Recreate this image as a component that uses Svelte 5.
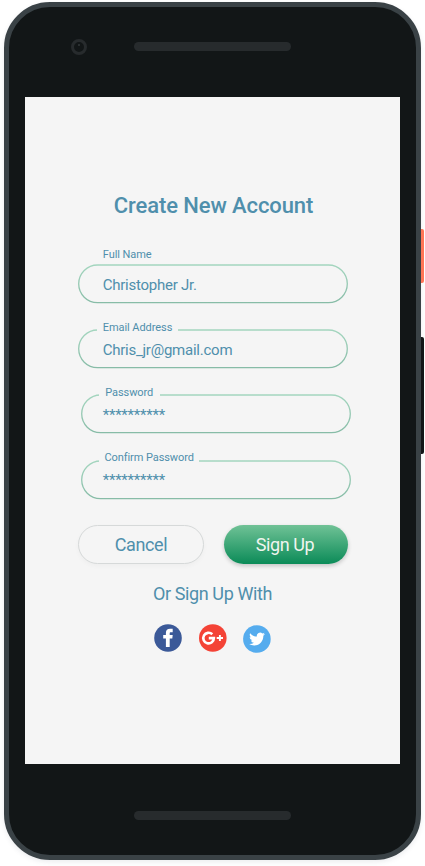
<script>
  const fields = [
    { label: 'Full Name', value: 'Christopher Jr.', shift: 0, labelLeft: 24.8, labelTop: -16, textTop: 1 },
    { label: 'Email Address', value: 'Chris_jr@gmail.com', shift: 0, labelLeft: 24.8, labelTop: -8.4, textTop: 1, gap: 81 },
    { label: 'Password', value: '**********', shift: 2.7, labelLeft: 24.5, labelTop: -8.2, textTop: 0.8, gap: 60.5 },
    { label: 'Confirm Password', value: '**********', shift: 2.7, labelLeft: 23.7, labelTop: -9, textTop: 0, gap: 99.5 }
  ];
</script>

<div class="stage">
  <div class="phone">
    <span class="power"></span>
    <span class="volume"></span>
    <header class="top">
      <span class="camera"><i></i></span>
      <span class="speaker"></span>
    </header>
    <main class="screen">
      <h1>Create New Account</h1>
      <form>
        {#each fields as f, i}
          <div class="field" style="margin-left: {f.shift}px">
            <svg class="outline" width="270" height="40" viewBox="0 0 270 40">
              <defs>
                <linearGradient id="edge{i}" x1="0" y1="0" x2="0" y2="40" gradientUnits="userSpaceOnUse">
                  <stop offset="0" stop-color="#a4d6bf" />
                  <stop offset="1" stop-color="#86bba6" />
                </linearGradient>
              </defs>
              <rect x=".7" y="1" width="268.6" height="37.7" rx="18.85" fill="none" stroke="url(#edge{i})" stroke-width="1.3" />
            </svg>
            {#if f.gap}
              <span class="notch" style="width: {f.gap}px"></span>
            {/if}
            <span class="label" style="left: {f.labelLeft}px; top: {f.labelTop}px">{f.label}</span>
            <span class="value" style="padding: {f.textTop}px 0 0 {24.7 - f.shift}px">{f.value}</span>
          </div>
        {/each}
        <div class="actions">
          <button type="button" class="cancel">Cancel</button>
          <button type="button" class="signup">Sign Up</button>
        </div>
      </form>
      <p>Or Sign Up With</p>
      <div class="social">
        <svg width="28" height="28" viewBox="0 0 28 28">
          <circle cx="14" cy="14" r="13.8" fill="#3b5998" />
          <path fill="#fff" d="M11.9 23v-8.4H9.2V11h2.7V8.9c0-2.9 1.5-4.2 4.2-4.2h2.6v3.6h-1.8c-1 0-1.2.4-1.2 1.3V11h3l-.4 3.6h-2.6V23z" />
        </svg>
        <svg width="28" height="28" viewBox="0 0 28 28">
          <circle cx="13.8" cy="14" r="13.8" fill="#f44336" />
          <path fill="none" stroke="#fff" stroke-width="2.6" d="M13.3 10.3A5.3 5.3 0 1 0 14.9 14.1H9.8" />
          <path fill="none" stroke="#fff" stroke-width="1.9" d="M17.7 14h6.3M20.9 10.9v6.2" />
        </svg>
        <svg class="twitter" width="28" height="28" viewBox="0 0 28 28">
          <circle cx="13.9" cy="14" r="13.8" fill="#55acee" />
          <path transform="translate(6.1 6.1) scale(.66)" fill="#fff" d="M23.95 4.57a10 10 0 0 1-2.82.77 4.96 4.96 0 0 0 2.16-2.72c-.95.55-2 .95-3.13 1.18a4.92 4.92 0 0 0-8.38 4.48C7.69 8.1 4.07 6.13 1.64 3.16a4.82 4.82 0 0 0-.67 2.48c0 1.71.87 3.21 2.19 4.1a4.9 4.9 0 0 1-2.23-.62v.06a4.92 4.92 0 0 0 3.95 4.83 5 5 0 0 1-2.21.08 4.94 4.94 0 0 0 4.6 3.42A9.87 9.87 0 0 1 0 19.54a13.99 13.99 0 0 0 7.55 2.21c9.05 0 14-7.5 14-13.98 0-.21 0-.42-.02-.63a9.94 9.94 0 0 0 2.42-2.57z" />
        </svg>
      </div>
    </main>
    <footer class="bottom"><span class="speaker"></span></footer>
  </div>
</div>

<style>
  :global(body) {
    background: #fff;
    overflow: hidden;
  }
  .stage {
    box-sizing: border-box;
    width: 425px;
    height: 866px;
    padding: 2px 4px 0;
    overflow: hidden;
    background: #fff;
    font-family: Roboto, sans-serif;
    color: #4f8fac;
  }
  .phone {
    box-sizing: border-box;
    position: relative;
    width: 417px;
    height: 858px;
    border: 5px solid #3a4246;
    border-radius: 46px;
    background: #121617;
    box-shadow: 0 2px 5px rgba(60, 70, 90, .1);
  }
  .power,
  .volume {
    position: absolute;
    left: 412px;
    width: 3px;
    border-radius: 0 2px 2px 0;
  }
  .power {
    top: 222px;
    height: 54px;
    background: #ff7657;
  }
  .volume {
    top: 330px;
    height: 117px;
    background: #121617;
  }
  .top {
    display: flex;
    align-items: flex-start;
    height: 90px;
  }
  .camera {
    box-sizing: border-box;
    width: 16px;
    height: 16px;
    margin: 32px 47px 0 62px;
    border: 3px solid #272b2d;
    border-radius: 50%;
  }
  .camera i {
    display: block;
    width: 2px;
    height: 2px;
    margin: 2px 0 0 4px;
    border-radius: 1px;
    background: #33383a;
  }
  .speaker {
    width: 157px;
    height: 9px;
    border-radius: 5px;
    background: #272b2d;
  }
  .top .speaker {
    margin-top: 35px;
  }
  .bottom {
    display: flex;
    justify-content: center;
    padding-top: 47px;
  }
  .screen {
    box-sizing: border-box;
    width: 375px;
    height: 667px;
    margin-left: 16px;
    padding-top: 94px;
    background: #f5f5f5;
  }
  h1 {
    margin: 0 0 46px 2px;
    height: 27px;
    font-size: 22px;
    line-height: 29px;
    font-weight: 500;
    letter-spacing: -.1px;
    text-align: center;
    white-space: nowrap;
  }
  form {
    width: 273px;
    margin-left: 53px;
  }
  .field {
    position: relative;
    display: flex;
    width: 270px;
    height: 40px;
    margin-bottom: 25.2px;
  }
  .outline,
  .notch,
  .label {
    position: absolute;
  }
  .outline {
    inset: 0;
  }
  .notch {
    top: 0;
    left: 18.5px;
    height: 3px;
    background: #f5f5f5;
  }
  .label {
    font-size: 11px;
    line-height: 14px;
    letter-spacing: -.07px;
    white-space: nowrap;
  }
  .value {
    position: relative;
    font-size: 15px;
    line-height: 41px;
    letter-spacing: -.24px;
    white-space: nowrap;
  }
  .actions {
    display: flex;
    gap: 20px;
    width: 270px;
  }
  button {
    box-sizing: border-box;
    height: 39px;
    padding: 0;
    border-radius: 20px;
    font: 400 18px/37px Roboto, sans-serif;
    letter-spacing: -.4px;
  }
  .cancel {
    width: 126px;
    border: 1px solid #d6d9d9;
    background: #f5f5f5;
    color: #4f8fac;
    box-shadow: 0 2px 5px rgba(0, 0, 0, .03);
  }
  .signup {
    width: 124px;
    padding-right: 2px;
    border: 0;
    background: linear-gradient(#70c296, #0b8b58);
    color: #f0f5ef;
    box-shadow: 0 2px 4px rgba(0, 0, 0, .2);
  }
  p {
    height: 24px;
    margin: 18px 0 0;
    font-size: 18px;
    line-height: 24px;
    letter-spacing: -.4px;
    text-align: center;
  }
  .social {
    display: flex;
    justify-content: center;
    gap: 16.5px;
    margin-top: 18px;
  }
  .twitter {
    margin-top: 1px;
  }
</style>
